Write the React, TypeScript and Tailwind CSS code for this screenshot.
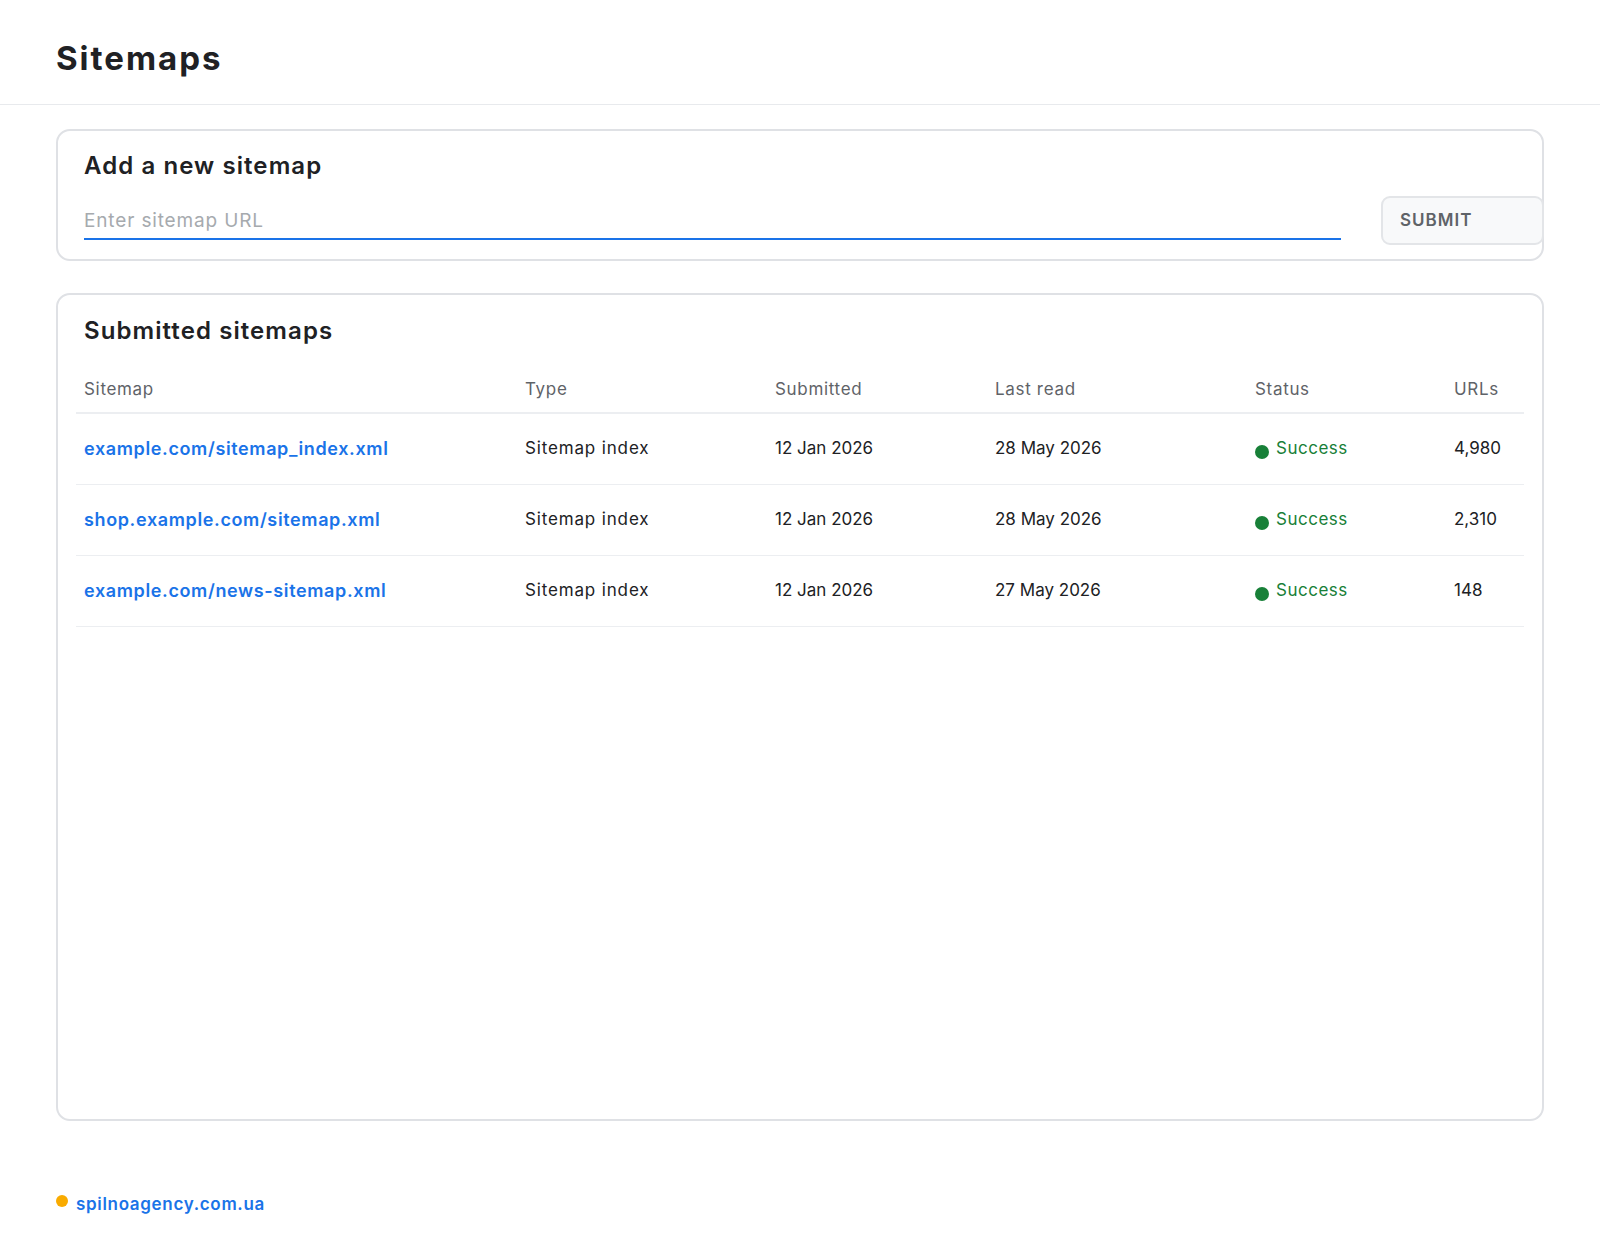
import { useState } from 'react';

interface SitemapRow {
  url: string;
  type: string;
  submitted: string;
  lastRead: string;
  status: 'Success';
  urls: string;
}

const ROWS: SitemapRow[] = [
  {
    url: 'example.com/sitemap_index.xml',
    type: 'Sitemap index',
    submitted: '12 Jan 2026',
    lastRead: '28 May 2026',
    status: 'Success',
    urls: '4,980',
  },
  {
    url: 'shop.example.com/sitemap.xml',
    type: 'Sitemap index',
    submitted: '12 Jan 2026',
    lastRead: '28 May 2026',
    status: 'Success',
    urls: '2,310',
  },
  {
    url: 'example.com/news-sitemap.xml',
    type: 'Sitemap index',
    submitted: '12 Jan 2026',
    lastRead: '27 May 2026',
    status: 'Success',
    urls: '148',
  },
];

const COLS = 'grid grid-cols-[441px_250px_220px_260px_199px_1fr]';

function AddSitemapCard() {
  const [value, setValue] = useState('');

  return (
    <section className="h-[132px] rounded-[14px] border-2 border-[#dfe1e5] pl-[26px] pr-[26px] pt-[20px]">
      <h2 className="text-[24px] font-semibold leading-[30px] tracking-[0.045em] text-[#202124]">
        Add a new sitemap
      </h2>
      <div className="mr-[-28px] mt-[16px] flex items-start gap-[40px]">
        <input
          type="text"
          value={value}
          onChange={(e) => setValue(e.target.value)}
          placeholder="Enter sitemap URL"
          className="h-[43px] flex-1 border-b-2 border-[#1a73e8] bg-transparent pt-[6px] text-[19px] tracking-[0.045em] text-[#202124] placeholder:text-[#a6aaae] focus:outline-none"
        />
        <button className="-mt-[1px] h-[49px] w-[163px] rounded-[9px] border-2 border-[#e3e5e8] bg-[#f8f9fa] pl-[17px] text-left text-[17px] font-semibold tracking-[0.06em] text-[#5f6368]">
          SUBMIT
        </button>
      </div>
    </section>
  );
}

function StatusCell({ label }: { label: string }) {
  return (
    <div className="flex items-center gap-[7px] tracking-[0.03em] text-[#188038]">
      <span className="mt-[6px] h-[14px] w-[14px] rounded-full bg-[#188038]" />
      <span>{label}</span>
    </div>
  );
}

function SubmittedCard() {
  return (
    <section className="flex-1 rounded-[14px] border-2 border-[#dfe1e5] px-[18px] pt-[21px]">
      <h2 className="pl-[8px] text-[24px] font-semibold leading-[30px] tracking-[0.045em] text-[#202124]">
        Submitted sitemaps
      </h2>
      <div className="mt-[22px] text-[17px]">
        <div
          className={`${COLS} h-[46px] items-center border-b-2 border-[#eceef1] tracking-[0.04em] text-[#5f6368]`}
        >
          <div className="px-2">Sitemap</div>
          <div className="px-2">Type</div>
          <div className="px-2">Submitted</div>
          <div className="px-2">Last read</div>
          <div className="px-2">Status</div>
          <div className="px-2">URLs</div>
        </div>
        {ROWS.map((row) => (
          <div
            key={row.url}
            className={`${COLS} h-[71px] items-center border-b border-[#eceef1] text-[#202124]`}
          >
            <div className="px-2">
              <a href="#" className="text-[18px] font-semibold tracking-[0.035em] text-[#1a73e8]">
                {row.url}
              </a>
            </div>
            <div className="px-2 tracking-[0.05em]">{row.type}</div>
            <div className="px-2">{row.submitted}</div>
            <div className="px-2">{row.lastRead}</div>
            <div className="px-2">
              <StatusCell label={row.status} />
            </div>
            <div className="px-2">{row.urls}</div>
          </div>
        ))}
      </div>
    </section>
  );
}

export default function App() {
  return (
    <div className="flex min-h-screen flex-col bg-white font-['Inter','Liberation_Sans',sans-serif]">
      <header className="h-[105px] border-b border-[#e8eaed] px-[56px] pt-[38px]">
        <h1 className="text-[33px] font-bold leading-[40px] tracking-[0.06em] text-[#202124]">
          Sitemaps
        </h1>
      </header>

      <main className="flex flex-1 flex-col gap-[32px] px-[56px] pt-[24px]">
        <AddSitemapCard />
        <SubmittedCard />
      </main>

      <footer className="flex h-[119px] items-end px-[56px] pb-[24px]">
        <div className="flex items-start gap-[8px]">
          <span className="mt-[3px] h-[12px] w-[12px] rounded-full bg-[#f9ab00]" />
          <a
            href="#"
            className="text-[17px] font-semibold leading-[24px] tracking-[0.04em] text-[#1a73e8]"
          >
            spilnoagency.com.ua
          </a>
        </div>
      </footer>
    </div>
  );
}
